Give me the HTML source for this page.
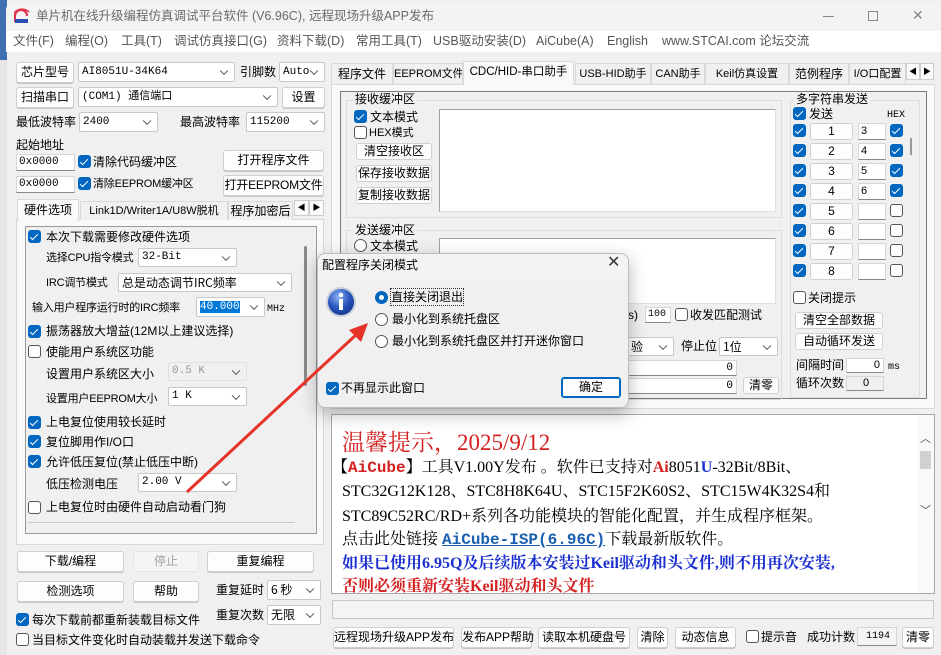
<!DOCTYPE html>
<html><head><meta charset="utf-8"><style>
*{box-sizing:border-box;margin:0;padding:0}
body{width:941px;height:655px;overflow:hidden;background:#f0f0f0;position:relative;font-family:"Liberation Sans","Noto Sans CJK SC",sans-serif;font-size:12px;color:#000}
.a{position:absolute}
.t{position:absolute;white-space:nowrap;line-height:16px;font-size:12px}
.s{font-size:11px;letter-spacing:-0.2px}
.btn{position:absolute;background:#fdfdfd;border:1px solid #d0d0d0;border-radius:3px;text-align:center;font-size:12px;white-space:nowrap;box-shadow:0 1px 0 #c4c4c4}
.cmb{position:absolute;background:#fff;border:1px solid #c8c8c8;border-radius:2px;font-size:11px;white-space:nowrap;padding-left:3px;font-family:"Liberation Mono","Noto Sans CJK SC",monospace}
.cmb:after{content:"";position:absolute;right:7px;top:50%;width:5px;height:5px;border-right:1px solid #555;border-bottom:1px solid #555;transform:translateY(-70%) rotate(45deg)}
.inp{position:absolute;background:#fff;border:1px solid #d6d6d6;border-bottom:1px solid #888;font-size:11px;white-space:nowrap;padding-left:2px;font-family:"Liberation Mono",monospace}
.cb{position:absolute;width:13px;height:13px;border-radius:3px;background:#0067c0}
.cb:after{content:"";position:absolute;left:4px;top:1.5px;width:3px;height:7px;border:solid #fff;border-width:0 1.6px 1.6px 0;transform:rotate(45deg)}
.ub{position:absolute;width:13px;height:13px;border-radius:3px;background:#fff;border:1px solid #555}
.rd{position:absolute;width:13px;height:13px;border-radius:50%;background:#fff;border:1px solid #555}
.tab{position:absolute;top:63px;height:21px;border:1px solid #d9d9d9;border-bottom:none;background:#f0f0f0;font-size:12px;text-align:center;line-height:20px;white-space:nowrap;overflow:hidden}
.grp{position:absolute;border:1px solid #dcdcdc;border-radius:2px}
.gl{position:absolute;background:#f0f0f0;padding:0 2px;line-height:14px;font-size:12px;white-space:nowrap}
.nb{position:absolute;background:#fdfdfd;border:1px solid #d0d0d0;border-radius:3px;text-align:center;font-size:12px;line-height:15px}
.sf{font-family:"Liberation Serif","Noto Serif CJK SC",serif}
</style></head><body>
<div class="a" style="left:0;top:0;width:7px;height:655px;background:#e6e6e6"></div>
<div class="a" style="left:0;top:0;width:7px;height:60px;background:#3f6fb0"></div>
<div class="a" style="left:6px;top:2px;width:935px;height:29px;background:#f3f3f3;border-radius:8px 8px 0 0"></div>
<svg class="a" style="left:13px;top:8px" width="18" height="16" viewBox="0 0 18 16"><path d="M2 14 V8 a6 6 0 0 1 12 0" stroke="#e0304a" stroke-width="2" fill="none"/><path d="M2 14 V4 a10 10 0 0 1 14 0" stroke="#e0304a" stroke-width="1.6" fill="none"/><rect x="2" y="11" width="13" height="4" fill="#2a4fb0"/></svg>
<div class="t" style="left:36px;top:8px;color:#6b6b6b;font-size:12.5px">单片机在线升级编程仿真调试平台软件 (V6.96C), 远程现场升级APP发布</div>
<div class="a" style="left:823px;top:16px;width:11px;height:1px;background:#888"></div>
<div class="a" style="left:868px;top:11px;width:10px;height:10px;border:1px solid #888"></div>
<div class="t" style="left:912px;top:7px;color:#888;font-size:14px">✕</div>
<div class="a" style="left:6px;top:31px;width:935px;height:21px;background:#fff"></div>
<div class="t" style="left:13px;top:33px;color:#555;font-size:12.5px">文件(F)</div>
<div class="t" style="left:65px;top:33px;color:#555;font-size:12.5px">编程(O)</div>
<div class="t" style="left:121px;top:33px;color:#555;font-size:12.5px">工具(T)</div>
<div class="t" style="left:174px;top:33px;color:#555;font-size:12.5px">调试仿真接口(G)</div>
<div class="t" style="left:277px;top:33px;color:#555;font-size:12.5px">资料下载(D)</div>
<div class="t" style="left:356px;top:33px;color:#555;font-size:12.5px">常用工具(T)</div>
<div class="t" style="left:433px;top:33px;color:#555;font-size:12.5px">USB驱动安装(D)</div>
<div class="t" style="left:536px;top:33px;color:#555;font-size:12.5px">AiCube(A)</div>
<div class="t" style="left:607px;top:33px;color:#555;font-size:12.5px">English</div>
<div class="t" style="left:662px;top:33px;color:#555;font-size:12.5px">www.STCAI.com 论坛交流</div>

<div class="btn" style="left:16px;top:62px;width:58px;height:21px;line-height:19px">芯片型号</div>
<div class="cmb" style="left:78px;top:62px;width:157px;height:20px;line-height:18px">AI8051U-34K64</div>
<div class="t" style="left:240px;top:64px">引脚数</div>
<div class="cmb" style="left:279px;top:62px;width:46px;height:20px;line-height:18px">Auto</div>
<div class="btn" style="left:16px;top:87px;width:58px;height:21px;line-height:19px">扫描串口</div>
<div class="cmb" style="left:78px;top:87px;width:200px;height:20px;line-height:18px">(COM1) 通信端口</div>
<div class="btn" style="left:282px;top:87px;width:43px;height:21px;line-height:19px">设置</div>
<div class="t" style="left:16px;top:114px">最低波特率</div>
<div class="cmb" style="left:79px;top:112px;width:79px;height:20px;line-height:18px">2400</div>
<div class="t" style="left:180px;top:114px">最高波特率</div>
<div class="cmb" style="left:246px;top:112px;width:79px;height:20px;line-height:18px">115200</div>
<div class="t" style="left:16px;top:137px">起始地址</div>
<div class="inp" style="left:16px;top:154px;width:59px;height:17px;line-height:15px">0x0000</div>
<div class="cb" style="left:78px;top:155px"></div>
<div class="t" style="left:93px;top:154px">清除代码缓冲区</div>
<div class="btn" style="left:223px;top:150px;width:101px;height:21px;line-height:19px">打开程序文件</div>
<div class="inp" style="left:16px;top:176px;width:59px;height:17px;line-height:15px">0x0000</div>
<div class="cb" style="left:78px;top:177px"></div>
<div class="t s" style="left:93px;top:176px">清除EEPROM缓冲区</div>
<div class="btn s" style="left:223px;top:175px;width:101px;height:21px;line-height:19px">打开EEPROM文件</div>
<div class="a" style="left:16px;top:219px;width:308px;height:326px;border:1px solid #d9d9d9;background:#f9f9f9"></div>
<div class="tab" style="left:17px;top:199px;width:62px;height:22px;background:#f9f9f9">硬件选项</div>
<div class="tab" style="left:80px;top:201px;width:148px;height:19px;font-size:11px;line-height:18px">Link1D/Writer1A/U8W脱机</div>
<div class="tab" style="left:228px;top:201px;width:65px;height:19px;line-height:18px">程序加密后</div>
<div class="a" style="left:294px;top:200px;width:15px;height:16px;border:1px solid #ccc;background:#fafafa;font-size:8px;text-align:center;line-height:14px">◀</div>
<div class="a" style="left:309px;top:200px;width:15px;height:16px;border:1px solid #ccc;background:#fafafa;font-size:8px;text-align:center;line-height:14px">▶</div>
<div class="a" style="left:25px;top:226px;width:292px;height:308px;border:1px solid #9a9a9a;background:#f0f0f0"></div>
<div class="a" style="left:304px;top:246px;width:3px;height:140px;background:#8a8a8a;border-radius:2px"></div>
<div class="cb" style="left:28px;top:230px"></div>
<div class="t" style="left:46px;top:229px">本次下载需要修改硬件选项</div>
<div class="t s" style="left:46px;top:250px">选择CPU指令模式</div>
<div class="cmb" style="left:138px;top:248px;width:99px;height:19px;line-height:17px">32-Bit</div>
<div class="t s" style="left:46px;top:275px">IRC调节模式</div>
<div class="cmb" style="left:118px;top:273px;width:174px;height:19px;line-height:17px;font-family:'Noto Sans CJK SC',sans-serif;font-size:12px">总是动态调节IRC频率</div>
<div class="t s" style="left:32px;top:300px">输入用户程序运行时的IRC频率</div>
<div class="cmb" style="left:196px;top:297px;width:69px;height:20px;line-height:18px"><span style="background:#0078d7;color:#fff">40.000</span></div>
<div class="t" style="left:267px;top:302px;font-size:10px;font-family:'Liberation Mono',monospace">MHz</div>
<div class="cb" style="left:28px;top:325px"></div>
<div class="t" style="left:46px;top:323px">振荡器放大增益(12M以上建议选择)</div>
<div class="ub" style="left:28px;top:345px"></div>
<div class="t" style="left:46px;top:344px">使能用户系统区功能</div>
<div class="t" style="left:46px;top:366px">设置用户系统区大小</div>
<div class="cmb" style="left:168px;top:362px;width:79px;height:19px;line-height:17px;background:#f0f0f0;color:#999;border-color:#e0e0e0">0.5 K</div>
<div class="t s" style="left:46px;top:391px">设置用户EEPROM大小</div>
<div class="cmb" style="left:168px;top:387px;width:79px;height:19px;line-height:17px">1  K</div>
<div class="cb" style="left:28px;top:416px"></div>
<div class="t" style="left:46px;top:414px">上电复位使用较长延时</div>
<div class="cb" style="left:28px;top:435px"></div>
<div class="t" style="left:46px;top:434px">复位脚用作I/O口</div>
<div class="cb" style="left:28px;top:455px"></div>
<div class="t" style="left:46px;top:454px">允许低压复位(禁止低压中断)</div>
<div class="t" style="left:46px;top:476px">低压检测电压</div>
<div class="cmb" style="left:138px;top:473px;width:99px;height:19px;line-height:17px">2.00 V</div>
<div class="ub" style="left:28px;top:501px"></div>
<div class="t" style="left:46px;top:499px">上电复位时由硬件自动启动看门狗</div>
<div class="a" style="left:28px;top:522px;width:267px;height:1px;background:#c8c8c8"></div>
<div class="btn" style="left:17px;top:551px;width:107px;height:21px;line-height:19px">下载/编程</div>
<div class="btn" style="left:133px;top:551px;width:66px;height:21px;line-height:19px;color:#a0a0a0;background:#f5f5f5;box-shadow:none;border-color:#e3e3e3">停止</div>
<div class="btn" style="left:207px;top:551px;width:107px;height:21px;line-height:19px">重复编程</div>
<div class="btn" style="left:17px;top:581px;width:107px;height:21px;line-height:19px">检测选项</div>
<div class="btn" style="left:133px;top:581px;width:66px;height:21px;line-height:19px">帮助</div>
<div class="t" style="left:216px;top:582px">重复延时</div>
<div class="cmb" style="left:267px;top:580px;width:54px;height:20px;line-height:18px;font-family:'Noto Sans CJK SC',sans-serif;font-size:12px">6 秒</div>
<div class="t" style="left:216px;top:607px">重复次数</div>
<div class="cmb" style="left:267px;top:605px;width:54px;height:20px;line-height:18px;font-family:'Noto Sans CJK SC',sans-serif;font-size:12px">无限</div>
<div class="cb" style="left:16px;top:613px"></div>
<div class="t" style="left:32px;top:612px">每次下载前都重新装载目标文件</div>
<div class="ub" style="left:16px;top:633px"></div>
<div class="t" style="left:32px;top:632px">当目标文件变化时自动装载并发送下载命令</div>

<div class="a" style="left:331px;top:84px;width:604px;height:325px;border:1px solid #d9d9d9;background:#f9f9f9"></div>
<div class="tab" style="left:331px;width:62px">程序文件</div>
<div class="tab" style="left:393px;width:70px;font-size:11px">EEPROM文件</div>
<div class="tab" style="left:463px;top:61px;width:111px;height:24px;background:#f9f9f9;font-size:11.5px">CDC/HID-串口助手</div>
<div class="tab" style="left:575px;width:76px;font-size:11px">USB-HID助手</div>
<div class="tab" style="left:651px;width:54px;font-size:11px">CAN助手</div>
<div class="tab" style="left:705px;width:84px;font-size:11px">Keil仿真设置</div>
<div class="tab" style="left:789px;width:60px">范例程序</div>
<div class="tab" style="left:849px;width:57px;font-size:11px">I/O口配置</div>
<div class="a" style="left:906px;top:63px;width:14px;height:17px;border:1px solid #ccc;background:#fafafa;font-size:8px;text-align:center;line-height:15px">◀</div>
<div class="a" style="left:920px;top:63px;width:14px;height:17px;border:1px solid #ccc;background:#fafafa;font-size:8px;text-align:center;line-height:15px">▶</div>
<div class="a" style="left:340px;top:91px;width:587px;height:308px;border:1px solid #7a7a7a;background:#f0f0f0"></div>
<div class="grp" style="left:346px;top:100px;width:436px;height:118px"></div>
<div class="gl" style="left:353px;top:92px">接收缓冲区</div>
<div class="cb" style="left:354px;top:110px"></div>
<div class="t" style="left:370px;top:109px">文本模式</div>
<div class="ub" style="left:354px;top:126px"></div>
<div class="t" style="left:369px;top:125px;font-size:11px">HEX模式</div>
<div class="nb" style="left:356px;top:143px;width:76px;height:17px">清空接收区</div>
<div class="nb" style="left:356px;top:165px;width:76px;height:17px">保存接收数据</div>
<div class="nb" style="left:356px;top:187px;width:76px;height:17px">复制接收数据</div>
<div class="a" style="left:439px;top:109px;width:337px;height:103px;background:#fff;border:1px solid #a0a0a0;border-right-color:#e0e0e0;border-bottom-color:#e0e0e0"></div>
<div class="grp" style="left:346px;top:230px;width:436px;height:170px"></div>
<div class="gl" style="left:353px;top:223px">发送缓冲区</div>
<div class="rd" style="left:354px;top:239px"></div>
<div class="t" style="left:370px;top:238px">文本模式</div>
<div class="a" style="left:439px;top:238px;width:337px;height:66px;background:#fff;border:1px solid #a0a0a0;border-right-color:#e0e0e0;border-bottom-color:#e0e0e0"></div>
<div class="t" style="left:628px;top:307px">s)</div>
<div class="inp" style="left:645px;top:307px;width:26px;height:16px;line-height:14px;font-size:10px">100</div>
<div class="ub" style="left:675px;top:308px"></div>
<div class="t" style="left:690px;top:307px">收发匹配测试</div>
<div class="cmb" style="left:628px;top:337px;width:46px;height:19px;line-height:17px;font-family:'Noto Sans CJK SC',sans-serif;font-size:12px;border-left:none">验</div>
<div class="t" style="left:681px;top:338px">停止位</div>
<div class="cmb" style="left:719px;top:337px;width:59px;height:19px;line-height:17px;font-family:'Noto Sans CJK SC',sans-serif;font-size:12px">1位</div>
<div class="inp" style="left:628px;top:360px;width:109px;height:16px;line-height:14px;text-align:right;padding-right:3px;border-left:none">0</div>
<div class="inp" style="left:628px;top:378px;width:109px;height:16px;line-height:14px;text-align:right;padding-right:3px;border-left:none">0</div>
<div class="nb" style="left:743px;top:377px;width:36px;height:17px">清零</div>
<div class="grp" style="left:790px;top:100px;width:130px;height:298px"></div>
<div class="gl" style="left:794px;top:92px">多字符串发送</div>
<div class="cb" style="left:793px;top:107px"></div>
<div class="t" style="left:809px;top:106px">发送</div>
<div class="t" style="left:887px;top:108px;font-size:10px;font-family:'Liberation Mono',monospace">HEX</div>
<div class="cb" style="left:793px;top:124px"></div><div class="nb" style="left:810px;top:123px;width:43px;height:17px">1</div><div class="inp" style="left:858px;top:123px;width:28px;height:17px;line-height:15px;font-family:'Liberation Sans'">3</div><div class="cb" style="left:890px;top:124px"></div>
<div class="cb" style="left:793px;top:144px"></div><div class="nb" style="left:810px;top:143px;width:43px;height:17px">2</div><div class="inp" style="left:858px;top:143px;width:28px;height:17px;line-height:15px;font-family:'Liberation Sans'">4</div><div class="cb" style="left:890px;top:144px"></div>
<div class="cb" style="left:793px;top:164px"></div><div class="nb" style="left:810px;top:163px;width:43px;height:17px">3</div><div class="inp" style="left:858px;top:163px;width:28px;height:17px;line-height:15px;font-family:'Liberation Sans'">5</div><div class="cb" style="left:890px;top:164px"></div>
<div class="cb" style="left:793px;top:184px"></div><div class="nb" style="left:810px;top:183px;width:43px;height:17px">4</div><div class="inp" style="left:858px;top:183px;width:28px;height:17px;line-height:15px;font-family:'Liberation Sans'">6</div><div class="cb" style="left:890px;top:184px"></div>
<div class="cb" style="left:793px;top:204px"></div><div class="nb" style="left:810px;top:203px;width:43px;height:17px">5</div><div class="inp" style="left:858px;top:203px;width:28px;height:17px"></div><div class="ub" style="left:890px;top:204px"></div>
<div class="cb" style="left:793px;top:224px"></div><div class="nb" style="left:810px;top:223px;width:43px;height:17px">6</div><div class="inp" style="left:858px;top:223px;width:28px;height:17px"></div><div class="ub" style="left:890px;top:224px"></div>
<div class="cb" style="left:793px;top:244px"></div><div class="nb" style="left:810px;top:243px;width:43px;height:17px">7</div><div class="inp" style="left:858px;top:243px;width:28px;height:17px"></div><div class="ub" style="left:890px;top:244px"></div>
<div class="cb" style="left:793px;top:264px"></div><div class="nb" style="left:810px;top:263px;width:43px;height:17px">8</div><div class="inp" style="left:858px;top:263px;width:28px;height:17px"></div><div class="ub" style="left:890px;top:264px"></div>
<div class="a" style="left:910px;top:138px;width:2px;height:17px;background:#999"></div>
<div class="ub" style="left:793px;top:291px"></div>
<div class="t" style="left:808px;top:290px">关闭提示</div>
<div class="nb" style="left:795px;top:312px;width:88px;height:17px">清空全部数据</div>
<div class="nb" style="left:795px;top:333px;width:88px;height:17px">自动循环发送</div>
<div class="t" style="left:796px;top:357px">间隔时间</div>
<div class="inp" style="left:846px;top:358px;width:38px;height:15px;line-height:13px;text-align:right;padding-right:3px;font-family:'Liberation Sans'">0</div>
<div class="t" style="left:888px;top:360px;font-size:10px;font-family:'Liberation Mono',monospace">ms</div>
<div class="t" style="left:796px;top:375px">循环次数</div>
<div class="inp" style="left:846px;top:376px;width:38px;height:15px;line-height:13px;text-align:center;font-family:'Liberation Sans';background:#f0f0f0">0</div>

<div class="a" style="left:331px;top:414px;width:604px;height:180px;background:#fff;border:1px solid #a8a8a8;overflow:hidden">
 <div class="t sf" style="left:10px;top:14px;font-size:23px;line-height:28px;color:#d42020">温馨提示，2025/9/12</div>
 <div class="t sf" style="left:0px;top:43px;font-size:16px;line-height:20px;color:#000">【<b style="color:#d42020;font-family:'Liberation Mono',monospace">AiCube</b>】工具V1.00Y发布 。软件已支持对<b style="color:#d42020">Ai</b>8051<b style="color:#1a2fd0">U</b>-32Bit/8Bit、</div>
 <div class="t sf" style="left:10px;top:67px;font-size:16px;line-height:20px">STC32G12K128、STC8H8K64U、STC15F2K60S2、STC15W4K32S4和</div>
 <div class="t sf" style="left:10px;top:92px;font-size:16px;line-height:20px">STC89C52RC/RD+系列各功能模块的智能化配置，并生成程序框架。</div>
 <div class="t sf" style="left:10px;top:115px;font-size:16px;line-height:20px">点击此处链接 <b style="color:#1a5fb0;text-decoration:underline;font-family:'Liberation Mono',monospace">AiCube-ISP(6.96C)</b>下载最新版软件。</div>
 <div class="t sf" style="left:10px;top:139px;font-size:16px;line-height:20px;color:#1a2fd0;font-weight:bold">如果已使用6.95Q及后续版本安装过Keil驱动和头文件,则不用再次安装,</div>
 <div class="t sf" style="left:10px;top:162px;font-size:16px;line-height:20px;color:#d42020;font-weight:bold">否则必须重新安装Keil驱动和头文件</div>
 <div class="a" style="right:0;top:0;width:17px;height:178px;background:#f9f9f9"></div>
 <div class="t" style="right:3px;top:16px;font-size:11px;color:#555">︿</div>
 <div class="a" style="right:3px;top:36px;width:11px;height:18px;background:#d0d0d0"></div>
 <div class="t" style="right:3px;top:88px;font-size:11px;color:#555">﹀</div>
</div>
<div class="a" style="left:332px;top:600px;width:602px;height:19px;background:#f4f4f4;border:1px solid #c8c8c8"></div>
<div class="btn" style="left:333px;top:627px;width:121px;height:21px;line-height:19px">远程现场升级APP发布</div>
<div class="btn" style="left:461px;top:627px;width:71px;height:21px;line-height:19px">发布APP帮助</div>
<div class="btn" style="left:538px;top:627px;width:92px;height:21px;line-height:19px">读取本机硬盘号</div>
<div class="btn" style="left:637px;top:627px;width:31px;height:21px;line-height:19px">清除</div>
<div class="btn" style="left:675px;top:627px;width:61px;height:21px;line-height:19px">动态信息</div>
<div class="ub" style="left:746px;top:630px"></div>
<div class="t" style="left:761px;top:629px">提示音</div>
<div class="t" style="left:807px;top:629px">成功计数</div>
<div class="inp" style="left:857px;top:627px;width:40px;height:19px;line-height:17px;text-align:center;background:#f4f4f4;font-size:10px">1194</div>
<div class="btn" style="left:902px;top:627px;width:32px;height:21px;line-height:19px">清零</div>

<!-- dialog -->
<div class="a" style="left:317px;top:253px;width:312px;height:155px;background:#f0f0f0;border:1px solid #bdbdbd;border-radius:8px;box-shadow:0 6px 18px rgba(0,0,0,.28)"></div>
<div class="a" style="left:318px;top:254px;width:310px;height:25px;background:#f3f3f3;border-radius:8px 8px 0 0"></div>
<div class="t" style="left:322px;top:257px">配置程序关闭模式</div>
<div class="t" style="left:607px;top:255px;font-size:16px;color:#333">✕</div>
<svg class="a" style="left:325px;top:286px" width="32" height="32" viewBox="0 0 32 32"><defs><radialGradient id="g" cx="40%" cy="30%" r="70%"><stop offset="0" stop-color="#8fb4f0"/><stop offset=".6" stop-color="#2a56c0"/><stop offset="1" stop-color="#173a94"/></radialGradient></defs><circle cx="16" cy="16" r="15" fill="#c8cfdb"/><circle cx="16" cy="16" r="13" fill="url(#g)"/><circle cx="16" cy="9" r="2.2" fill="#fff"/><rect x="14" y="13" width="4" height="11" fill="#fff"/></svg>
<div class="a" style="left:375px;top:291px;width:13px;height:13px;border-radius:50%;background:#0067c0"></div>
<div class="a" style="left:379px;top:295px;width:5px;height:5px;border-radius:50%;background:#fff"></div>
<div class="t" style="left:391px;top:289px;outline:1px dotted #333">直接关闭退出</div>
<div class="rd" style="left:375px;top:313px"></div>
<div class="t" style="left:392px;top:311px">最小化到系统托盘区</div>
<div class="rd" style="left:375px;top:335px"></div>
<div class="t" style="left:392px;top:333px">最小化到系统托盘区并打开迷你窗口</div>
<div class="cb" style="left:326px;top:382px"></div>
<div class="t" style="left:341px;top:380px">不再显示此窗口</div>
<div class="btn" style="left:561px;top:377px;width:60px;height:21px;line-height:18px;border:1px solid #0067c0;box-shadow:inset 0 0 0 1px #0067c0">确定</div>

<!-- arrow on top -->
<svg class="a" style="left:0;top:0" width="941" height="655"><line x1="187" y1="492" x2="358" y2="333" stroke="#e5332a" stroke-width="3"/><path d="M368 323 L349 330 L361 342 Z" fill="#e5332a"/></svg>
</body></html>
